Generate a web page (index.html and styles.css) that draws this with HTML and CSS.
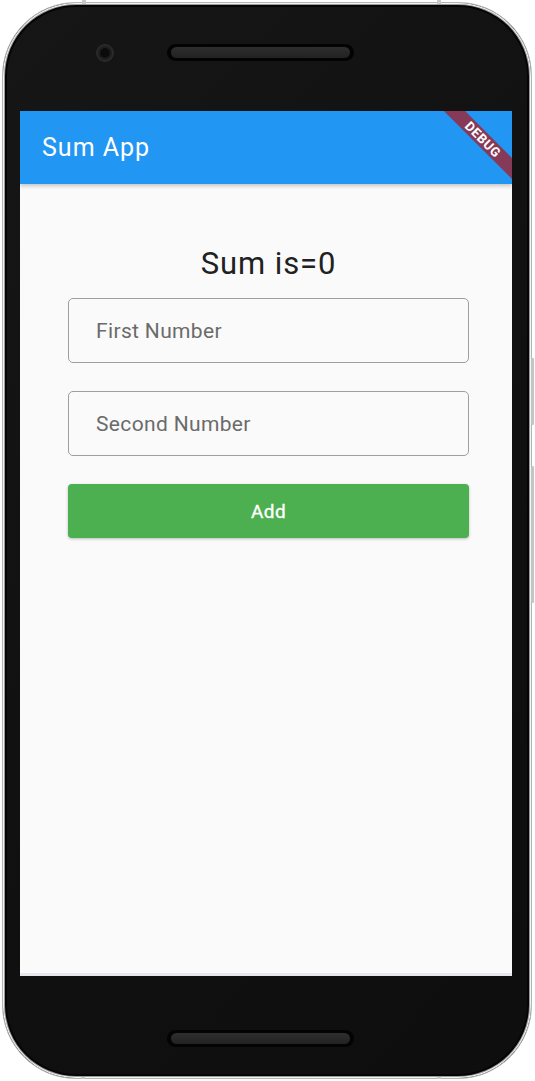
FILE: index.html
```html
<!DOCTYPE html>
<html>
<head>
<meta charset="utf-8">
<link rel="stylesheet" href="styles.css">
</head>
<body>
<div class="phone">
  <span class="mark mark-tl"></span>
  <span class="mark mark-tr"></span>
  <span class="mark mark-bl"></span>
  <span class="mark mark-br"></span>
  <span class="side side-a"></span>
  <span class="side side-b"></span>
  <div class="bezel-top">
    <div class="camera"><div class="lens"></div></div>
    <div class="speaker"><div class="grill"></div></div>
  </div>
  <div class="screen">
    <div class="appbar">
      <div class="title">Sum App</div>
    </div>
    <div class="content">
      <div class="sum">Sum is=0</div>
      <div class="field"><input class="input" type="text" placeholder="First Number"></div>
      <div class="field"><input class="input" type="text" placeholder="Second Number"></div>
      <button class="add">Add</button>
    </div>
    <div class="banner">DEBUG</div>
  </div>
  <div class="bezel-bottom">
    <div class="speaker"><div class="grill"></div></div>
  </div>
</div>
</body>
</html>
```

FILE: styles.css
```css
html, body {
  margin: 0;
  padding: 0;
  background: #ffffff;
  font-family: Roboto, "Liberation Sans", sans-serif;
}

.phone {
  position: relative;
  margin: 2px 0 0 2px;
  width: 530px;
  height: 1077px;
  box-sizing: border-box;
  border: 1px solid #b5b5b5;
  border-radius: 74px;
  background: linear-gradient(135deg, #161616 0%, #101010 60%, #0e0e0e 100%);
  box-shadow: inset 0 0 0 1px #f4f4f4, inset 0 0 0 2px #9a9a9a, inset 0 0 0 4px #050505;
  display: flex;
  flex-direction: column;
  align-items: flex-start;
}

.mark {
  position: absolute;
  width: 4px;
  height: 4px;
  background: #c9c9c9;
}
.mark-tl { left: 79px; top: -3px; }
.mark-tr { left: 434px; top: -3px; }
.mark-bl { left: 78px; bottom: -3px; }
.mark-br { left: 434px; bottom: -3px; }

.side {
  position: absolute;
  right: -3px;
  width: 3px;
  background: #c4c4c4;
  border-radius: 1px;
}
.side-a { top: 355px; height: 67px; }
.side-b { top: 463px; height: 137px; }

.bezel-top {
  height: 108px;
  width: 100%;
  box-sizing: border-box;
  padding: 41px 0 0 93px;
  display: flex;
  align-items: flex-start;
  gap: 53px;
}

.camera {
  width: 18px;
  height: 18px;
  border-radius: 50%;
  background: #1c1c1c;
  box-shadow: inset 0 0 0 2px #2a2a2a;
  display: flex;
  align-items: center;
  justify-content: center;
}
.lens {
  width: 10px;
  height: 10px;
  border-radius: 50%;
  background: #0b0b0b;
  box-shadow: 0 0 0 1px #232323;
}

.speaker {
  width: 187px;
  height: 17px;
  box-sizing: border-box;
  border-radius: 9px;
  background: #030303;
  padding: 3px 4px;
}
.grill {
  height: 100%;
  border-radius: 6px;
  background: linear-gradient(180deg, #2e2e2e 0%, #222 100%);
}

.screen {
  position: relative;
  overflow: hidden;
  margin-left: 17px;
  width: 492px;
  height: 865px;
  background: #fafafa;
  display: flex;
  flex-direction: column;
  box-shadow: inset 0 -3px 0 #e8e8ec;
}

.appbar {
  height: 73px;
  background: #2196f3;
  display: flex;
  align-items: center;
  padding-left: 22px;
  box-shadow: 0 2px 4px rgba(0,0,0,0.22);
  position: relative;
  z-index: 1;
}
.title {
  color: #ffffff;
  font-size: 25px;
  letter-spacing: 1px;
  line-height: 30px;
}

.content {
  display: flex;
  flex-direction: column;
  padding: 62px 0 0 48px;
}

.sum {
  width: 401px;
  text-align: center;
  font-size: 31px;
  letter-spacing: 0.9px;
  line-height: 36px;
  color: #212121;
  margin-bottom: 16px;
}

.field {
  width: 401px;
  height: 65px;
  box-sizing: border-box;
  border: 1.3px solid #9e9e9e;
  border-radius: 5px;
  display: flex;
  align-items: center;
  padding-left: 27px;
  margin-bottom: 28px;
}
.input {
  border: none;
  outline: none;
  background: transparent;
  padding: 0;
  width: 100%;
  font-family: Roboto, "Liberation Sans", sans-serif;
  font-size: 21px;
  letter-spacing: 0.35px;
  color: #616161;
}
.input::placeholder {
  color: #6b6b6b;
  opacity: 1;
}

.add {
  width: 401px;
  height: 54px;
  border: none;
  border-radius: 4px;
  background: #4caf50;
  color: #ffffff;
  font-family: Roboto, "Liberation Sans", sans-serif;
  font-size: 19px;
  font-weight: 400;
  letter-spacing: 0.4px;
  -webkit-text-stroke: 0.35px #ffffff;
  box-shadow: 0 1px 3px rgba(0,0,0,0.25);
  padding: 0;
}

.banner {
  position: absolute;
  top: 21px;
  right: -31px;
  width: 120px;
  height: 15px;
  line-height: 15px;
  text-align: center;
  transform: rotate(45deg);
  background: #873a58;
  color: #ffffff;
  font-size: 13px;
  font-weight: 700;
  letter-spacing: 0.6px;
  z-index: 2;
}

.bezel-bottom {
  width: 100%;
  box-sizing: border-box;
  padding: 54px 0 0 164px;
  display: flex;
}
```
